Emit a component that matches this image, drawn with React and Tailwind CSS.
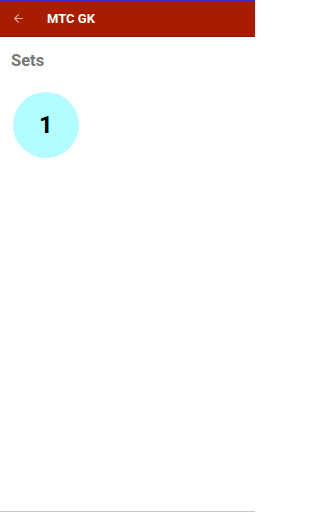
import { ArrowLeft } from "lucide-react";

export default function App() {
  return (
    <div className="w-[255px] h-[512px] flex flex-col bg-white font-['Roboto',_'Liberation_Sans',_sans-serif]">
      {/* top bar */}
      <div className="h-px bg-[#3b2bd0]" />
      <div className="h-[36px] flex items-center bg-[#a81c00] border-b border-[#8a1500]">
        <ArrowLeft className="ml-[12px] w-[13px] h-[13px] text-[#f3a9a0]" strokeWidth={2} />
        <span className="ml-[22px] text-[13px] font-bold text-white">MTC GK</span>
      </div>

      <div className="flex-1 flex flex-col px-[11px] pt-[14px]">
        <h2 className="text-[16.5px] font-bold text-[#777777] leading-[20px]">Sets</h2>
        <div className="mt-[21px] ml-[2px] w-[66px] h-[66px] rounded-full bg-[#b3fcff] flex items-center justify-center">
          <span className="text-[24px] font-bold text-black">1</span>
        </div>
      </div>

      <div className="h-px bg-[#c8c8c8]" />
    </div>
  );
}
